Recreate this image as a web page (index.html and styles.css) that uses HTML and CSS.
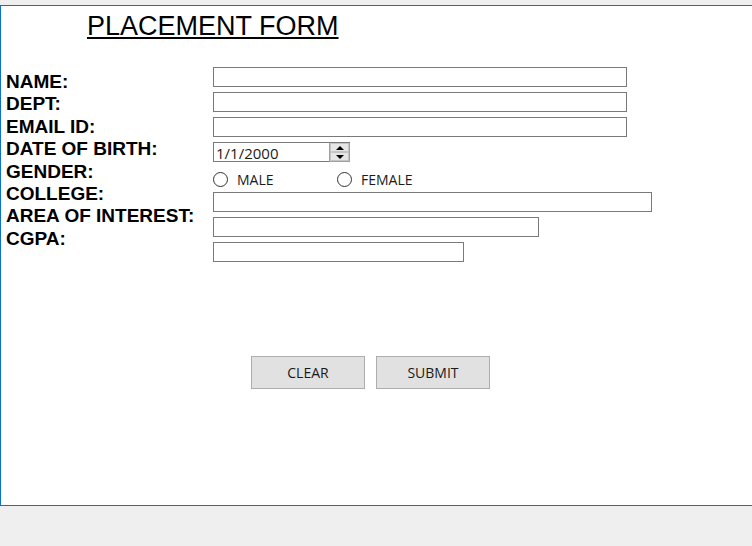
FILE: index.html
```html
<!DOCTYPE html>
<html>
<head>
<meta charset="utf-8">
<link rel="stylesheet" href="styles.css">
</head>
<body>
<div class="window">
  <h1 class="title">PLACEMENT FORM</h1>
  <div class="form">
    <div class="labels">
      <div class="label">NAME:</div>
      <div class="label">DEPT:</div>
      <div class="label">EMAIL ID:</div>
      <div class="label">DATE OF BIRTH:</div>
      <div class="label">GENDER:</div>
      <div class="label">COLLEGE:</div>
      <div class="label">AREA OF INTEREST:</div>
      <div class="label">CGPA:</div>
    </div>
    <div class="fields">
      <input class="box w-long" type="text">
      <input class="box w-long" type="text">
      <input class="box w-long" type="text">
      <div class="date">
        <span class="date-text">1/1/2000</span>
        <span class="spin">
          <span class="spin-btn"><span class="arrow-up"></span></span>
          <span class="spin-btn"><span class="arrow-down"></span></span>
        </span>
      </div>
      <div class="radios">
        <label class="radio r-male"><span class="circle"></span>MALE</label>
        <label class="radio"><span class="circle"></span>FEMALE</label>
      </div>
      <input class="box w-college" type="text">
      <input class="box w-area" type="text">
      <input class="box w-cgpa" type="text">
    </div>
  </div>
  <div class="buttons">
    <button class="btn">CLEAR</button>
    <button class="btn">SUBMIT</button>
  </div>
</div>
</body>
</html>
```
FILE: styles.css
```css
html, body {
  margin: 0;
  padding: 0;
  background: #efefef;
  overflow: hidden;
}
.window {
  margin-top: 5px;
  height: 501px;
  box-sizing: border-box;
  background: #ffffff;
  border-top: 1px solid #0a72c8;
  border-bottom: 1px solid #0a72c8;
  border-left: 1px solid #0a72c8;
}
.title {
  margin: 0;
  padding: 5px 0 0 86px;
  font-family: "Liberation Sans", Arial, sans-serif;
  font-weight: normal;
  font-size: 27px;
  line-height: 30px;
  text-decoration: underline;
  text-decoration-thickness: 2px;
  text-underline-offset: 2px;
  color: #000;
}
.form {
  display: flex;
  margin-top: 26px;
}
.labels {
  width: 212px;
  box-sizing: border-box;
  padding: 4px 0 0 5px;
  display: flex;
  flex-direction: column;
}
.label {
  font-family: "Liberation Sans", Arial, sans-serif;
  font-weight: bold;
  font-size: 19px;
  line-height: 22.4px;
  color: #000;
  white-space: nowrap;
}
.fields {
  display: flex;
  flex-direction: column;
  gap: 5px;
}
.box {
  display: block;
  margin: 0;
  padding: 0;
  height: 20px;
  box-sizing: border-box;
  border: 1px solid #7a7a7a;
  background: #fff;
  outline: none;
}
.w-long { width: 414px; }
.w-college { width: 439px; }
.w-area { width: 326px; }
.w-cgpa { width: 251px; }
.date {
  width: 137px;
  height: 20px;
  box-sizing: border-box;
  border: 1px solid #7a7a7a;
  border-right: none;
  display: flex;
  align-items: stretch;
  background: #fff;
}
.date-text {
  flex: 1;
  align-self: center;
  font-family: "Open Sans", "Noto Sans", sans-serif;
  font-size: 15px;
  line-height: 18px;
  padding-left: 2px;
  margin-top: 1px;
  color: #1a1a1a;
}
.spin {
  width: 21px;
  display: flex;
  flex-direction: column;
  box-sizing: border-box;
  border: 1px solid #a0a0a0;
  border-top: none;
  background: #e6e6e6;
  margin-bottom: -1px;
}
.spin-btn {
  flex: 1;
  display: flex;
  align-items: center;
  justify-content: center;
  border: 1px solid #c4c4c4;
  background: #e6e6e6;
}
.arrow-up {
  width: 0;
  height: 0;
  border-left: 4px solid transparent;
  border-right: 4px solid transparent;
  border-bottom: 4px solid #000;
}
.arrow-down {
  width: 0;
  height: 0;
  border-left: 4px solid transparent;
  border-right: 4px solid transparent;
  border-top: 4px solid #000;
}
.radios {
  display: flex;
  height: 20px;
  align-items: flex-start;
}
.radio {
  display: flex;
  align-items: flex-start;
  padding-top: 3px;
  font-family: "Open Sans", "Noto Sans", sans-serif;
  font-size: 14px;
  line-height: 20px;
  color: #1a1a1a;
}
.r-male { width: 124px; }
.circle {
  width: 13px;
  height: 13px;
  border: 1px solid #333;
  border-radius: 50%;
  background: #fff;
  margin-right: 9px;
  margin-top: 2px;
}
.buttons {
  display: flex;
  gap: 11px;
  padding-left: 250px;
  margin-top: 94px;
}
.btn {
  width: 114px;
  height: 33px;
  margin: 0;
  box-sizing: border-box;
  border: 1px solid #adadad;
  background: #e1e1e1;
  font-family: "Open Sans", "Noto Sans", sans-serif;
  font-size: 14px;
  color: #1a1a1a;
  padding: 0;
}
```
